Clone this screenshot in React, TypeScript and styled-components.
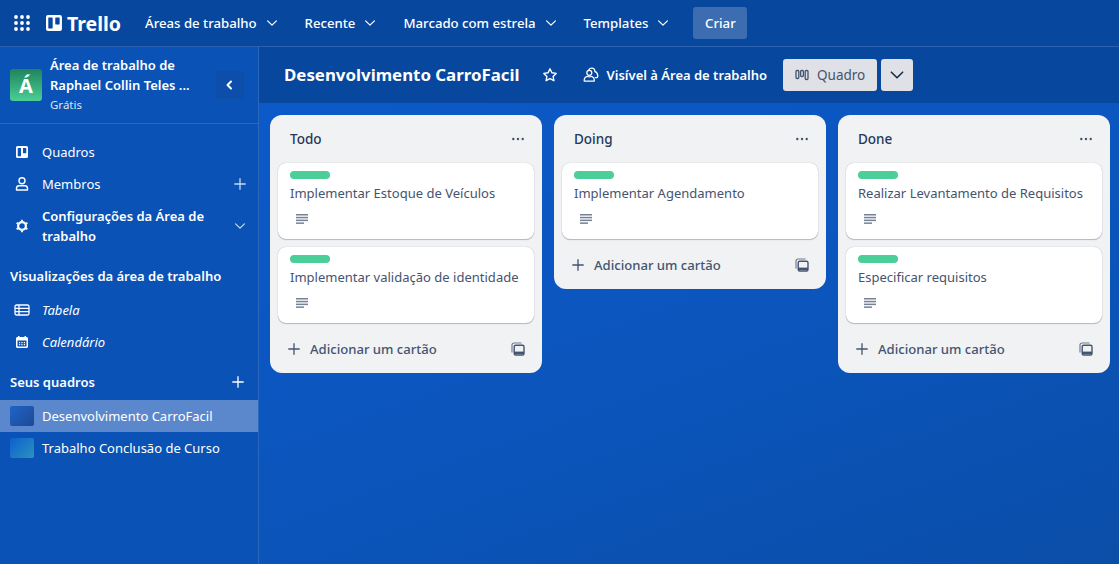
import React from "react"
import styled, { createGlobalStyle } from "styled-components"

const GlobalStyle = createGlobalStyle`
  html, body {
    margin: 0;
    padding: 0;
    height: 100%;
    overflow: hidden;
  }
  body {
    font-family: "Noto Sans", "Liberation Sans", sans-serif;
    font-size: 14px;
    color: #fff;
  }
  * {
    box-sizing: border-box;
  }
`

type IconProps = { size?: number }

const Chevron = ({ size = 16 }: IconProps) => (
  <svg width={size} height={size} viewBox="0 0 16 16" fill="none" stroke="currentColor" strokeWidth="1.4" strokeLinecap="round" strokeLinejoin="round">
    <path d="M3 5.5l5 5 5-5" />
  </svg>
)

const Plus = ({ size = 16 }: IconProps) => (
  <svg width={size} height={size} viewBox="0 0 16 16" fill="none" stroke="currentColor" strokeWidth="1.5">
    <path d="M8 1.5v13M1.5 8h13" />
  </svg>
)

const BoardIcon = ({ size = 16 }: IconProps) => (
  <svg width={size} height={size} viewBox="0 0 16 16">
    <path
      fill="currentColor"
      fillRule="evenodd"
      d="M2 0h12a2 2 0 0 1 2 2v12a2 2 0 0 1-2 2H2a2 2 0 0 1-2-2V2a2 2 0 0 1 2-2zM2.800 2.500a.5.5 0 0 0-.5.5v10a.5.5 0 0 0 .5.5h3.400a.5.5 0 0 0 .5-.5V3a.5.5 0 0 0-.5-.5zM9.800 2.500a.5.5 0 0 0-.5.5v6a.5.5 0 0 0 .5.5h3.400a.5.5 0 0 0 .5-.5V3a.5.5 0 0 0-.5-.5z"
    />
  </svg>
)

const Grid = () => (
  <svg width="16" height="16" viewBox="0 0 16 16" fill="currentColor">
    {[2, 8, 14].map((y) =>
      [2, 8, 14].map((x) => <circle key={`${x}-${y}`} cx={x} cy={y} r="1.9" />)
    )}
  </svg>
)

const Person = () => (
  <svg width="16" height="16" viewBox="0 0 16 16" fill="none" stroke="currentColor" strokeWidth="1.4">
    <circle cx="8" cy="4.800" r="3" />
    <path d="M2.500 14v-1.500c0-1.500 1.200-2.700 2.700-2.700h5.600c1.500 0 2.700 1.200 2.700 2.700V14z" strokeLinejoin="round" />
  </svg>
)

const Gear = () => (
  <svg width="16" height="16" viewBox="0 0 16 16" fill="none" stroke="currentColor">
    <circle cx="8" cy="8" r="3.900" strokeWidth="2.200" />
    <path d="M8 1.800v1.500M8 12.700v1.500M2.600 4.900l1.300.7M12.100 10.400l1.300.7M2.600 11.100l1.300-.7M12.100 5.600l1.300-.7" strokeWidth="1.800" />
  </svg>
)

const TableIcon = () => (
  <svg width="16" height="16" viewBox="0 0 16 16" fill="none" stroke="currentColor" strokeWidth="1.300">
    <rect x="1" y="3" width="14" height="10" rx="1.500" />
    <path d="M1 6.300h14M1 9.700h14M5 3v10" />
  </svg>
)

const CalendarIcon = () => (
  <svg width="16" height="16" viewBox="0 0 16 16">
    <path
      fill="currentColor"
      fillRule="evenodd"
      d="M4 2h1.500v1h5V2H12v1h.5c.8 0 1.500.7 1.500 1.500v8c0 .8-.7 1.500-1.500 1.500h-9C2.700 14 2 13.300 2 12.500v-8C2 3.700 2.700 3 3.500 3H4zM3.500 6.500v6h9v-6zM5 8h1.200v1.200H5zm2.400 0h1.200v1.200H7.400zm2.400 0H11v1.200H9.800zM5 10h1.200v1.200H5zm2.400 0h1.200v1.200H7.400zm2.400 0H11v1.200H9.800z"
    />
  </svg>
)

const Star = () => (
  <svg width="16" height="16" viewBox="0 0 16 16" fill="none" stroke="currentColor" strokeWidth="1.400" strokeLinejoin="round">
    <path d="M8 1.800l1.900 4 4.300.6-3.100 3 .8 4.300L8 11.600l-3.900 2.100.8-4.300-3.100-3 4.300-.6z" />
  </svg>
)

const People = () => (
  <svg width="16" height="16" viewBox="0 0 16 16" fill="none" stroke="currentColor" strokeWidth="1.250" strokeLinejoin="round" strokeLinecap="round">
    <circle cx="6.300" cy="5.800" r="2.500" />
    <path d="M1.200 14c-.2-2.700 1.300-4.300 3.200-4.700 1.200.8 2.600.8 3.800 0 1.800.4 3.300 2 3.100 4.700z" />
    <path d="M5.800 2.800C6.400 1.600 7.500 1 8.800 1c2 0 3.200 1.500 3 3.400 1.900.8 3 2.500 3 4.800 0 .8-.6 1.300-1.400 1.300h-1" />
  </svg>
)

const ColumnsIcon = () => (
  <svg width="14" height="14" viewBox="0 0 14 14" fill="none" stroke="currentColor" strokeWidth="1.300">
    <rect x="1" y="2.500" width="2.800" height="8" rx="1" />
    <rect x="5.600" y="2.500" width="2.800" height="6" rx="1" />
    <rect x="10.200" y="2.500" width="2.800" height="9" rx="1" />
  </svg>
)

const Lines = () => (
  <svg width="12" height="10" viewBox="0 0 12 10" fill="currentColor">
    <rect x="0" y="0" width="12" height="1.500" />
    <rect x="0" y="2.800" width="12" height="1.500" />
    <rect x="0" y="5.600" width="12" height="1.500" />
    <rect x="0" y="8.400" width="8" height="1.500" />
  </svg>
)

const Dots = () => (
  <svg width="12" height="4" viewBox="0 0 12 4" fill="currentColor">
    <circle cx="1.300" cy="2" r="1.200" />
    <circle cx="6" cy="2" r="1.200" />
    <circle cx="10.700" cy="2" r="1.200" />
  </svg>
)

const TemplateIcon = () => (
  <svg width="14" height="14" viewBox="0 0 14 14" fill="none" stroke="currentColor" strokeLinejoin="round">
    <path d="M1 10.500V3a2 2 0 0 1 2-2h7.500" strokeWidth="1.200" opacity="0.75" />
    <rect x="3.200" y="3.200" width="9.800" height="9.800" rx="1.500" strokeWidth="1.400" />
    <path d="M3.200 10.800h9.800" strokeWidth="2.400" />
  </svg>
)

type CardData = { title: string }
type ListData = { name: string; cards: CardData[] }

const lists: ListData[] = [
  {
    name: "Todo",
    cards: [{ title: "Implementar Estoque de Veículos" }, { title: "Implementar validação de identidade" }],
  },
  { name: "Doing", cards: [{ title: "Implementar Agendamento" }] },
  {
    name: "Done",
    cards: [{ title: "Realizar Levantamento de Requisitos" }, { title: "Especificar requisitos" }],
  },
]

const navItems = ["Áreas de trabalho", "Recente", "Marcado com estrela", "Templates"]

export default function App() {
  return (
    <Page>
      <GlobalStyle />
      <TopNav>
        <GridButton>
          <Grid />
        </GridButton>
        <Logo>
          <BoardIcon size={16} />
          <LogoText>Trello</LogoText>
        </Logo>
        {navItems.map((item) => (
          <NavItem key={item}>
            {item}
            <Chevron size={14} />
          </NavItem>
        ))}
        <CreateButton>Criar</CreateButton>
      </TopNav>

      <Body>
        <Sidebar>
          <WorkspaceHeader>
            <WorkspaceAvatar>Á</WorkspaceAvatar>
            <WorkspaceInfo>
              <WorkspaceName>
                Área de trabalho de
                <br />
                Raphael Collin Teles ...
              </WorkspaceName>
              <WorkspacePlan>Grátis</WorkspacePlan>
            </WorkspaceInfo>
            <CollapseButton>
              <svg width="12" height="12" viewBox="0 0 12 12" fill="none" stroke="currentColor" strokeWidth="2" strokeLinecap="round" strokeLinejoin="round">
                <path d="M7 2.500L3.500 6 7 9.500" />
              </svg>
            </CollapseButton>
          </WorkspaceHeader>

          <SideNav>
            <SideRow>
              <SideIcon><BoardIcon size={12} /></SideIcon>
              <SideLabel>Quadros</SideLabel>
            </SideRow>
            <SideRow>
              <SideIcon><Person /></SideIcon>
              <SideLabel>Membros</SideLabel>
              <SideAction><Plus size={14} /></SideAction>
            </SideRow>
            <SideRow $tall>
              <SideIcon><Gear /></SideIcon>
              <SideLabel $strong>Configurações da Área de trabalho</SideLabel>
              <SideAction><Chevron size={14} /></SideAction>
            </SideRow>
          </SideNav>

          <SectionTitle>Visualizações da área de trabalho</SectionTitle>
          <SideRow>
            <SideIcon><TableIcon /></SideIcon>
            <SideLabel $italic>Tabela</SideLabel>
          </SideRow>
          <SideRow>
            <SideIcon><CalendarIcon /></SideIcon>
            <SideLabel $italic>Calendário</SideLabel>
          </SideRow>

          <BoardsHeading>
            <SectionLabel>Seus quadros</SectionLabel>
            <Plus size={14} />
          </BoardsHeading>
          <BoardRow $active>
            <BoardThumb $from="#1f63c9" $to="#1d4a94" />
            <SideLabel>Desenvolvimento CarroFacil</SideLabel>
          </BoardRow>
          <BoardRow>
            <BoardThumb $from="#0e5fd0" $to="#2a93bd" />
            <SideLabel>Trabalho Conclusão de Curso</SideLabel>
          </BoardRow>
        </Sidebar>

        <Main>
          <BoardBar>
            <BoardTitle>Desenvolvimento CarroFacil</BoardTitle>
            <StarButton><Star /></StarButton>
            <Visibility>
              <People />
              Visível à Área de trabalho
            </Visibility>
            <ViewButton>
              <ColumnsIcon />
              Quadro
            </ViewButton>
            <ViewToggle>
              <Chevron size={18} />
            </ViewToggle>
          </BoardBar>

          <Lists>
            {lists.map((list) => (
              <List key={list.name}>
                <ListHeader>
                  <ListName>{list.name}</ListName>
                  <ListMenu><Dots /></ListMenu>
                </ListHeader>
                <Cards>
                  {list.cards.map((card) => (
                    <Card key={card.title}>
                      <CardLabel />
                      <CardTitle>{card.title}</CardTitle>
                      <CardBadge><Lines /></CardBadge>
                    </Card>
                  ))}
                </Cards>
                <ListFooter>
                  <AddCard>
                    <Plus size={14} />
                    Adicionar um cartão
                  </AddCard>
                  <TemplateButton><TemplateIcon /></TemplateButton>
                </ListFooter>
              </List>
            ))}
          </Lists>
        </Main>
      </Body>
    </Page>
  )
}

const Page = styled.div`
  width: 1119px;
  height: 564px;
  display: flex;
  flex-direction: column;
  background: linear-gradient(160deg, #0c5ccf 0%, #0b55bd 60%, #0a4ea8 100%);
  overflow: hidden;
`

const TopNav = styled.header`
  height: 47px;
  flex-shrink: 0;
  display: flex;
  align-items: center;
  padding: 0 14px;
  background: #07479d;
  border-bottom: 1px solid #2a62ad;
`

const GridButton = styled.div`
  width: 16px;
  height: 16px;
  display: flex;
  margin-right: 16px;
`

const Logo = styled.div`
  display: flex;
  align-items: center;
  gap: 5px;
  width: 75px;
  margin-right: 24px;
`

const LogoText = styled.span`
  font-size: 19.500px;
  font-weight: 700;
`

const NavItem = styled.div`
  display: flex;
  align-items: center;
  gap: 8px;
  font-size: 13.200px;
  font-weight: 500;
  margin-right: 26px;

  &:nth-last-child(2) {
    margin-right: 23px;
  }
`

const CreateButton = styled.button`
  height: 32px;
  width: 54px;
  border: 0;
  border-radius: 3px;
  background: #3c6db1;
  color: #fff;
  font: 500 13.200px "Noto Sans", sans-serif;
`

const Body = styled.div`
  flex: 1;
  display: flex;
  min-height: 0;
`

const Sidebar = styled.aside`
  width: 259px;
  flex-shrink: 0;
  background: #0a52b5;
  border-right: 1px solid #2a67bd;
`

const WorkspaceHeader = styled.div`
  height: 77px;
  display: flex;
  align-items: center;
  padding: 0 14px 0 10px;
  border-bottom: 1px solid #2a67bd;
`

const WorkspaceAvatar = styled.div`
  width: 32px;
  height: 32px;
  flex-shrink: 0;
  border-radius: 3px;
  background: linear-gradient(180deg, #1f845a 0%, #4bce97 100%);
  display: flex;
  align-items: center;
  justify-content: center;
  font-size: 20px;
  font-weight: 700;
  margin-right: 8px;
`

const WorkspaceInfo = styled.div`
  flex: 1;
  min-width: 0;
`

const WorkspaceName = styled.div`
  font-size: 13px;
  font-weight: 600;
  line-height: 20px;
`

const WorkspacePlan = styled.div`
  font-size: 11.500px;
  line-height: 20px;
  opacity: 0.85;
`

const CollapseButton = styled.div`
  width: 28px;
  height: 28px;
  flex-shrink: 0;
  border-radius: 3px;
  background: #0c4ea9;
  display: flex;
  align-items: center;
  justify-content: center;
`

const SideNav = styled.nav`
  padding-top: 12px;
`

const SideRow = styled.div<{ $tall?: boolean }>`
  min-height: 32px;
  display: flex;
  align-items: center;
  padding: ${({ $tall }) => ($tall ? "6px" : "0")} 10px ${({ $tall }) => ($tall ? "6px" : "0")} 14px;
`

const SideIcon = styled.span`
  width: 16px;
  height: 16px;
  flex-shrink: 0;
  display: flex;
  align-items: center;
  justify-content: center;
  margin-right: 12px;
`

const SideLabel = styled.span<{ $italic?: boolean; $strong?: boolean }>`
  flex: 1;
  min-width: 0;
  font-size: 13px;
  line-height: 20px;
  font-style: ${({ $italic }) => ($italic ? "italic" : "normal")};
  font-weight: ${({ $strong }) => ($strong ? 600 : 400)};
`

const SideAction = styled.span`
  width: 14px;
  height: 14px;
  flex-shrink: 0;
  margin: 0 1px 0 10px;
  display: flex;
  color: #c6d7ef;
`

const SectionLabel = styled.span`
  font-size: 13px;
  font-weight: 600;
  line-height: 20px;
`

const SectionTitle = styled(SectionLabel).attrs({ as: "div" })`
  padding: 14px 10px 8px;
  white-space: nowrap;
`

const BoardsHeading = styled.div`
  height: 32px;
  margin: 8px 0 2px;
  padding: 0 13px 0 10px;
  display: flex;
  align-items: center;
  justify-content: space-between;
  color: #fff;
`

const BoardRow = styled.div<{ $active?: boolean }>`
  height: 32px;
  display: flex;
  align-items: center;
  padding: 0 10px;
  background: ${({ $active }) => ($active ? "#5b88cc" : "transparent")};
`

const BoardThumb = styled.span<{ $from: string; $to: string }>`
  width: 24px;
  height: 20px;
  flex-shrink: 0;
  border-radius: 2px;
  margin-right: 8px;
  background: linear-gradient(135deg, ${({ $from }) => $from}, ${({ $to }) => $to});
`

const Main = styled.main`
  flex: 1;
  min-width: 0;
`

const BoardBar = styled.div`
  height: 56px;
  display: flex;
  align-items: center;
  padding: 0 26px 0 25px;
  background: #07479d;
`

const BoardTitle = styled.h1`
  margin: 0 22px 0 0;
  font-size: 16.850px;
  font-weight: 700;
  line-height: 32px;
`

const StarButton = styled.span`
  display: flex;
  margin-right: 25px;
`

const Visibility = styled.div`
  display: flex;
  align-items: center;
  gap: 8px;
  font-size: 13px;
  font-weight: 600;
  margin-right: 16px;
`

const ViewButton = styled.div`
  width: 94px;
  height: 32px;
  border-radius: 3px;
  background: #dfe1e6;
  color: #44546f;
  display: flex;
  align-items: center;
  justify-content: center;
  gap: 8px;
  font-size: 13.500px;
  font-weight: 400;
  margin-right: 4px;
`

const ViewToggle = styled.div`
  width: 32px;
  height: 32px;
  border-radius: 3px;
  background: #dfe1e6;
  color: #172b4d;
  display: flex;
  align-items: center;
  justify-content: center;
`

const Lists = styled.div`
  display: flex;
  align-items: flex-start;
  gap: 12px;
  padding: 12px 11px;
`

const List = styled.section`
  width: 272px;
  flex-shrink: 0;
  border-radius: 12px;
  background: #f1f2f4;
  padding-bottom: 6px;
`

const ListHeader = styled.div`
  height: 48px;
  display: flex;
  align-items: center;
  justify-content: space-between;
  padding: 0 18px 1px 20px;
`

const ListName = styled.h2`
  margin: 0;
  color: #253858;
  font-size: 13.500px;
  font-weight: 500;
`

const ListMenu = styled.span`
  display: flex;
  color: #44546f;
`

const Cards = styled.div`
  display: flex;
  flex-direction: column;
  gap: 8px;
  padding: 0 8px;
`

const Card = styled.article`
  height: 76px;
  padding: 8px 12px;
  border-radius: 8px;
  background: #fff;
  box-shadow: 0 1px 1px #091e4240, 0 0 1px #091e424f;
`

const CardLabel = styled.div`
  width: 40px;
  height: 8px;
  border-radius: 4px;
  background: #4bce97;
`

const CardTitle = styled.div`
  margin-top: 4px;
  color: #44546f;
  font-size: 13.030px;
  line-height: 20px;
`

const CardBadge = styled.div`
  margin: 11px 0 0 6px;
  height: 10px;
  display: flex;
  color: #758195;
`

const ListFooter = styled.div`
  height: 36px;
  margin-top: 8px;
  display: flex;
  align-items: center;
  justify-content: space-between;
  padding: 0 17px 0 17px;
  color: #44546f;
`

const AddCard = styled.div`
  display: flex;
  align-items: center;
  gap: 9px;
  font-size: 13.100px;
  font-weight: 500;
`

const TemplateButton = styled.span`
  display: flex;
  color: #44546f;
`
